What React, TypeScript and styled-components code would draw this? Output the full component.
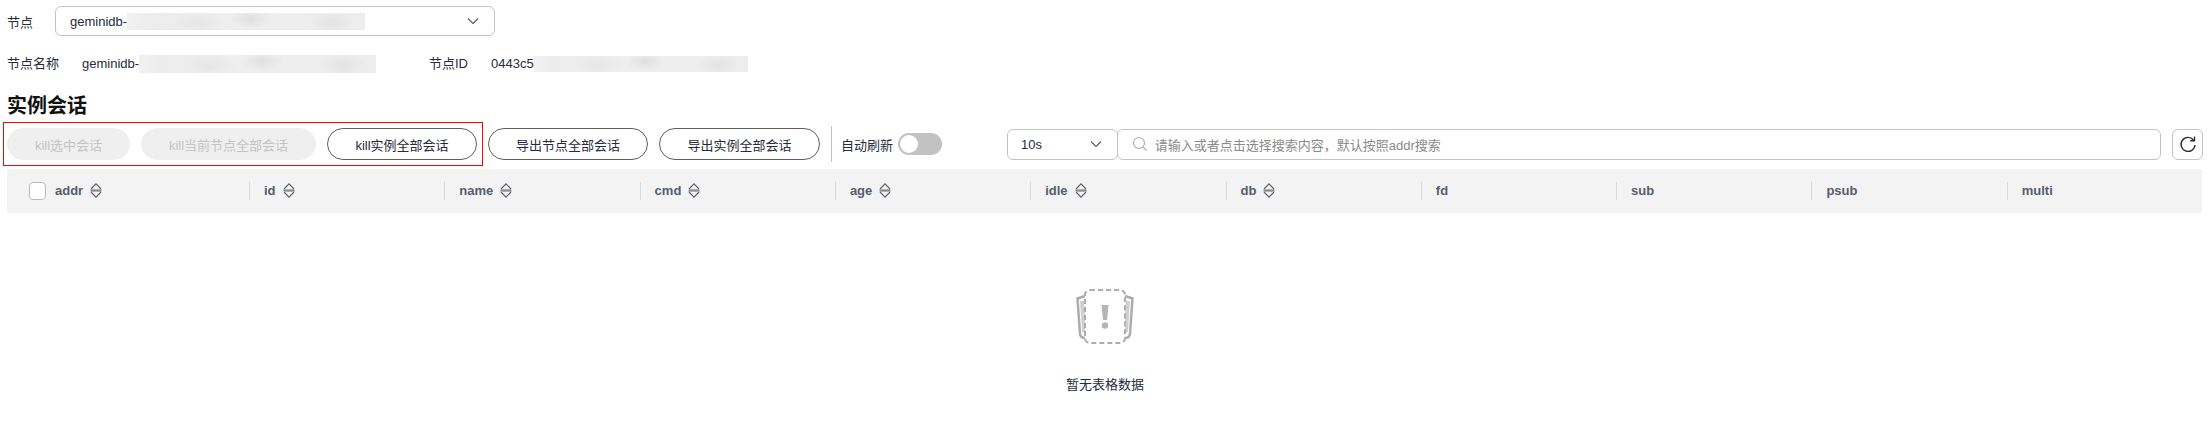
import React from 'react';
import styled, { createGlobalStyle } from 'styled-components';

const GlobalStyle = createGlobalStyle`
  * {
    margin: 0;
    padding: 0;
    box-sizing: border-box;
  }
  body {
    font-family: "Liberation Sans", "Noto Sans CJK SC", sans-serif;
    font-size: 13px;
    color: #252b3a;
    background-color: #ffffff;
  }
`;

const Page = styled.div`
  width: 2211px;
  height: 432px;
  padding: 6px 8px 0 7px;
  overflow: hidden;
  background-color: #fff;
`;

const NodeRow = styled.div`
  display: flex;
  align-items: center;
  height: 30px;
`;

const NodeLabel = styled.span`
  width: 48px;
`;

const NodeSelect = styled.div`
  position: relative;
  display: flex;
  align-items: center;
  width: 440px;
  height: 30px;
  padding-left: 14px;
  border: 1px solid #c4c4c4;
  border-radius: 6px;
`;

const Chevron = styled.svg`
  position: absolute;
  right: 14px;
  top: 50%;
  transform: translateY(-50%);
`;

const Masked = styled.span<{ $w: number; $h: number }>`
  display: inline-block;
  flex: none;
  width: ${(p) => p.$w}px;
  height: ${(p) => p.$h}px;
  background:
    radial-gradient(ellipse 9% 60% at 52% 35%, #e0e0e0, transparent),
    radial-gradient(ellipse 10% 70% at 86% 55%, #e3e3e3, transparent),
    radial-gradient(ellipse 12% 70% at 30% 60%, #e6e6e6, transparent),
    linear-gradient(90deg, #f1f1f1 0%, #ececec 12%, #efefef 40%, #eeeeee 70%, #ededed 100%);
`;

const InfoRow = styled.div`
  display: flex;
  align-items: center;
  height: 18px;
  line-height: 18px;
  margin-top: 19px;
`;

const InfoLabel = styled.span<{ $w: number }>`
  flex: none;
  width: ${(p) => p.$w}px;
`;

const InfoValue = styled.span<{ $w: number }>`
  display: flex;
  align-items: center;
  flex: none;
  width: ${(p) => p.$w}px;
`;

const Title = styled.h2`
  margin-top: 20px;
  height: 26px;
  font-size: 20px;
  line-height: 26px;
  font-weight: 700;
  color: #111;
`;

const Toolbar = styled.div`
  display: flex;
  align-items: center;
  height: 44px;
  margin-top: 3px;
`;

const Annotated = styled.div`
  display: flex;
  gap: 11px;
  height: 44px;
  margin-left: -4px;
  margin-right: 5px;
  padding: 5px 5px 5px 3px;
  border: 1.5px solid #f00;
`;

const Pill = styled.button<{ $w: number; $disabled?: boolean }>`
  width: ${(p) => p.$w}px;
  height: 32px;
  flex: none;
  font: inherit;
  border-radius: 16px;
  border: 1px solid ${(p) => (p.$disabled ? '#efefef' : '#5e5e5e')};
  background-color: ${(p) => (p.$disabled ? '#efefef' : '#fff')};
  color: ${(p) => (p.$disabled ? '#c4c4c4' : '#252b3a')};
`;

const PillGap = styled.div`
  display: flex;
  gap: 11px;
`;

const Divider = styled.div`
  width: 1px;
  height: 36px;
  margin: 0 9px 0 11px;
  background-color: #c4c4c4;
`;

const ToggleLabel = styled.span`
  width: 57px;
`;

const Toggle = styled.div`
  position: relative;
  width: 44px;
  height: 22px;
  border-radius: 11px;
  background-color: #c2c2c2;
`;

const ToggleKnob = styled.span`
  position: absolute;
  left: 2px;
  top: 2px;
  width: 18px;
  height: 18px;
  border-radius: 50%;
  background-color: #fff;
`;

const RateSelect = styled.div`
  position: relative;
  display: flex;
  align-items: center;
  width: 111px;
  height: 31px;
  margin-left: 65px;
  padding-left: 13px;
  border: 1px solid #c4c4c4;
  border-radius: 6px;
`;

const SearchBox = styled.div`
  display: flex;
  align-items: center;
  gap: 7px;
  width: 1045px;
  height: 31px;
  margin-left: -1px;
  padding-left: 14px;
  border: 1px solid #c4c4c4;
  border-radius: 6px;
  color: #8a8a8a;
`;

const RefreshButton = styled.div`
  display: flex;
  align-items: center;
  justify-content: center;
  width: 31px;
  height: 31px;
  margin-left: 11px;
  border: 1px solid #c4c4c4;
  border-radius: 6px;
`;

const TableHead = styled.div`
  display: grid;
  grid-template-columns: 242px repeat(10, 1fr);
  align-items: center;
  width: 2195px;
  height: 44px;
  margin-top: 3px;
  background-color: #f3f3f3;
  border-bottom: 1px solid #f0f0f0;
`;

const HeadCell = styled.div<{ $first?: boolean }>`
  display: flex;
  align-items: center;
  gap: 7px;
  height: 18px;
  padding-left: ${(p) => (p.$first ? '22px' : '14px')};
  border-left: ${(p) => (p.$first ? 'none' : '1px solid #d9d9d9')};
  font-weight: 700;
  color: #575d6c;
`;

const Checkbox = styled.span`
  width: 17px;
  height: 18px;
  margin-right: 2px;
  border: 1px solid #bbb;
  border-radius: 4px;
  background-color: #fff;
`;

const Empty = styled.div`
  display: flex;
  flex-direction: column;
  align-items: center;
  margin-top: 75px;
`;

const EmptyText = styled.p`
  margin-top: 28px;
  color: #252b3a;
`;

const columns = ['addr', 'id', 'name', 'cmd', 'age', 'idle', 'db', 'fd', 'sub', 'psub', 'multi'];
const sortable = ['addr', 'id', 'name', 'cmd', 'age', 'idle', 'db'];

const DownIcon = () => (
  <Chevron width="14" height="14" viewBox="0 0 14 14" fill="none" stroke="#575d6c" strokeWidth="1.2">
    <path d="M2 4.500 7 9.500 12 4.500" />
  </Chevron>
);

const SortIcon = () => (
  <svg width="12" height="15" viewBox="0 0 12 15" fill="none" stroke="#5a5f6b" strokeWidth="1.1">
    <path d="M1 6 6 .8 11 6" />
    <path d="M1 9 6 14.200 11 9" />
    <path d="M.5 7.500H11.500" stroke="#8f8f8f" strokeWidth="2.400" />
  </svg>
);

const EmptyIcon = () => (
  <svg width="60" height="58" viewBox="0 0 60 58" fill="none">
    <path d="M10 8 2.500 10.500 5 46 Q5.500 50 10 50" stroke="#adadad" strokeWidth="2.500" />
    <path d="M50 8 57.500 10.500 55 46 Q54.500 50 50 50" stroke="#adadad" strokeWidth="2.500" />
    <path d="M7 13 9 44M53 13 51 44" stroke="#d0d0d0" strokeWidth="4" />
    <rect x="10" y="2" width="40" height="53" rx="5" fill="#fff" stroke="#adadad" strokeWidth="2" strokeDasharray="5 3" />
    <path d="M26.500 17H33.500L32 32H28Z" fill="#b5b5b5" />
    <circle cx="30" cy="37.500" r="3.200" fill="#b5b5b5" />
  </svg>
);

export default function App() {
  return (
    <>
      <GlobalStyle />
      <Page>
        <NodeRow>
          <NodeLabel>节点</NodeLabel>
          <NodeSelect>
            geminidb-
            <Masked $w={238} $h={17} />
            <DownIcon />
          </NodeSelect>
        </NodeRow>

        <InfoRow>
          <InfoLabel $w={75}>节点名称</InfoLabel>
          <InfoValue $w={347}>
            geminidb-
            <Masked $w={237} $h={18} />
          </InfoValue>
          <InfoLabel $w={62}>节点ID</InfoLabel>
          <InfoValue $w={256}>
            0443c5
            <Masked $w={214} $h={16} />
          </InfoValue>
        </InfoRow>

        <Title>实例会话</Title>

        <Toolbar>
          <Annotated>
            <Pill $w={123} $disabled>kill选中会话</Pill>
            <Pill $w={175} $disabled>kill当前节点全部会话</Pill>
            <Pill $w={150}>kill实例全部会话</Pill>
          </Annotated>
          <PillGap>
            <Pill $w={160}>导出节点全部会话</Pill>
            <Pill $w={161}>导出实例全部会话</Pill>
          </PillGap>
          <Divider />
          <ToggleLabel>自动刷新</ToggleLabel>
          <Toggle>
            <ToggleKnob />
          </Toggle>
          <RateSelect>
            10s
            <DownIcon />
          </RateSelect>
          <SearchBox>
            <svg width="16" height="16" viewBox="0 0 16 16" fill="none" stroke="#b0b0b0" strokeWidth="1.2">
              <circle cx="7" cy="7" r="5.500" />
              <path d="M11 11 14.500 14.500" />
            </svg>
            请输入或者点击选择搜索内容，默认按照addr搜索
          </SearchBox>
          <RefreshButton>
            <svg width="18" height="18" viewBox="0 0 18 18" fill="none" stroke="#252b3a" strokeWidth="1.400">
              <path d="M14.500 5A7 7 0 1 0 16 10" />
              <path d="M15.500 1.500V5.800H11.200" />
            </svg>
          </RefreshButton>
        </Toolbar>

        <TableHead>
          {columns.map((name, i) => (
            <HeadCell key={name} $first={i === 0}>
              {i === 0 && <Checkbox />}
              {name}
              {sortable.includes(name) && <SortIcon />}
            </HeadCell>
          ))}
        </TableHead>

        <Empty>
          <EmptyIcon />
          <EmptyText>暂无表格数据</EmptyText>
        </Empty>
      </Page>
    </>
  );
}
